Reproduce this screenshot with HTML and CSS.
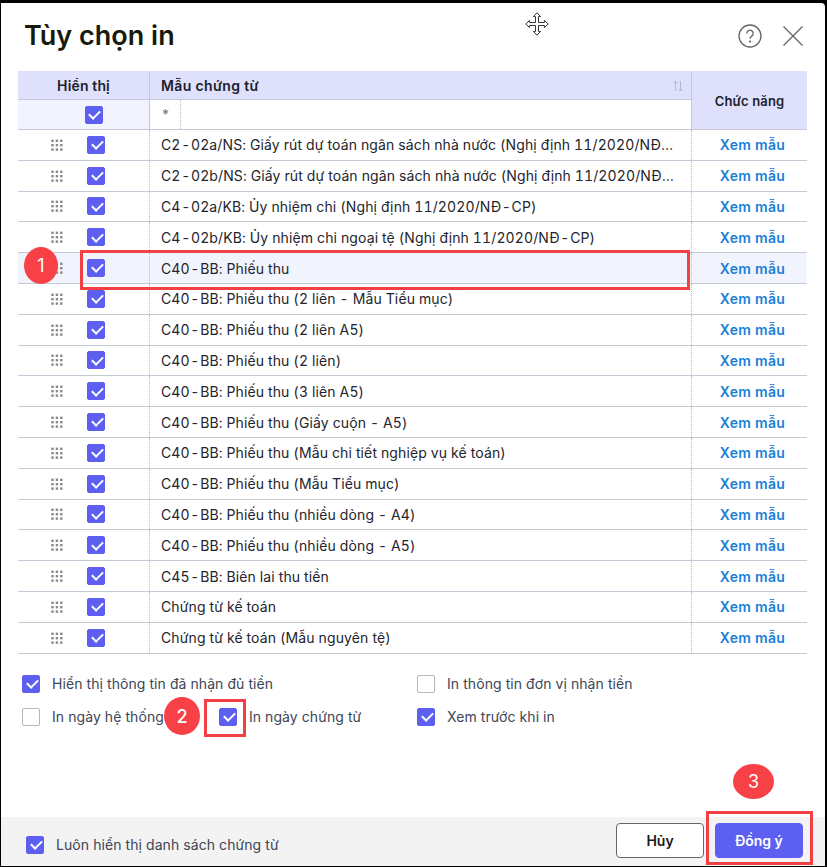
FILE: index.html
```html
<!DOCTYPE html>
<html lang="vi">
<head>
<meta charset="utf-8">
<title>Tùy chọn in</title>
<link rel="stylesheet" href="styles.css">
</head>
<body>
<div class="dialog">
  <header class="head">
    <h1 class="title">Tùy chọn in</h1>
    <div class="head-icons">
      <svg class="ic-help" width="24" height="24" viewBox="0 0 24 24" fill="none" stroke="#666" stroke-width="1.3"><circle cx="12" cy="12" r="11"/><path d="M8.8 9.4a3.2 3.2 0 1 1 4.9 2.7c-1.1.7-1.7 1.3-1.7 2.6"/><circle cx="12" cy="17.6" r=".5" fill="#666"/></svg>
      <svg class="ic-close" width="20" height="20" viewBox="0 0 20 20" fill="none" stroke="#666" stroke-width="1.3"><path d="M.5.5l19 19M19.5.5l-19 19"/></svg>
    </div>
  </header>

  <div class="table">
    <div class="thead">
      <div class="th th-show">Hiển thị</div>
      <div class="th th-name">Mẫu chứng từ
        <svg class="sort" width="10" height="12" viewBox="0 0 10 12" fill="none" stroke="#b5b8c6" stroke-width="1"><path d="M2.5 11V1M.5 3l2-2 2 2M7.5 1v10M5.5 9l2 2 2-2"/></svg>
      </div>
      <div class="th th-fn">Chức năng</div>
      <div class="filter-show"><span class="cb on"></span></div>
      <div class="filter-name"><span class="star">*</span><span class="filter-input"></span></div>
    </div>
    <div id="rows" class="rows"></div>
  </div>

  <div class="options">
    <label class="opt"><span class="cb on"></span>Hiển thị thông tin đã nhận đủ tiền</label>
    <label class="opt"><span class="cb"></span>In thông tin đơn vị nhận tiền</label>
    <div class="opt-pair">
      <label class="opt"><span class="cb"></span>In ngày hệ thống</label>
      <label class="opt"><span class="cb on"></span>In ngày chứng từ</label>
    </div>
    <label class="opt"><span class="cb on"></span>Xem trước khi in</label>
  </div>

  <footer class="foot">
    <label class="opt"><span class="cb on"></span>Luôn hiển thị danh sách chứng từ</label>
    <div class="btns">
      <button class="btn btn-cancel">Hủy</button>
      <button class="btn btn-ok">Đồng ý</button>
    </div>
  </footer>
</div>

<svg class="move" width="24" height="24" viewBox="0 0 24 24" fill="#fff" stroke="#333" stroke-width="1"><path d="M12 .8l3.6 3.8h-2.1v5.9h5.9V8.4l3.8 3.6-3.8 3.6v-2.1h-5.9v5.9h2.1L12 23.2l-3.6-3.8h2.1v-5.9H4.6v2.1L.8 12l3.8-3.6v2.1h5.9V4.6H8.4z"/></svg>
<div class="mark-box box-1"></div>
<div class="mark-box box-2"></div>
<div class="mark-box box-3"></div>
<div class="badge b-1">1</div>
<div class="badge b-2">2</div>
<div class="badge b-3">3</div>
<script src="app.js"></script>
</body>
</html>
```

FILE: app.js
```js
var names = [
  "C2-02a/NS: Giấy rút dự toán ngân sách nhà nước (Nghị định 11/2020/NĐ-CP)",
  "C2-02b/NS: Giấy rút dự toán ngân sách nhà nước (Nghị định 11/2020/NĐ-CP)",
  "C4-02a/KB: Ủy nhiệm chi (Nghị định 11/2020/NĐ-CP)",
  "C4-02b/KB: Ủy nhiệm chi ngoại tệ (Nghị định 11/2020/NĐ-CP)",
  "C40-BB: Phiếu thu",
  "C40-BB: Phiếu thu (2 liên - Mẫu Tiểu mục)",
  "C40-BB: Phiếu thu (2 liên A5)",
  "C40-BB: Phiếu thu (2 liên)",
  "C40-BB: Phiếu thu (3 liên A5)",
  "C40-BB: Phiếu thu (Giấy cuộn - A5)",
  "C40-BB: Phiếu thu (Mẫu chi tiết nghiệp vụ kế toán)",
  "C40-BB: Phiếu thu (Mẫu Tiểu mục)",
  "C40-BB: Phiếu thu (nhiều dòng - A4)",
  "C40-BB: Phiếu thu (nhiều dòng - A5)",
  "C45-BB: Biên lai thu tiền",
  "Chứng từ kế toán",
  "Chứng từ kế toán (Mẫu nguyên tệ)"
];
var dots = '<svg class="grip" width="12" height="12" viewBox="0 0 12 12" fill="#888">';
for (var y = 0; y < 3; y++) for (var x = 0; x < 3; x++)
  dots += '<rect x="' + (x * 4.4 + .3) + '" y="' + (y * 4.4 + .6) + '" width="2.4" height="2.4"/>';
dots += '</svg>';
var html = '';
names.forEach(function (n, i) {
  var label = n.replace(/(\S)-(\S)/g, '$1<span class="hy">-</span>$2');
  html += '<div class="row' + (i === 4 ? ' row-hi' : '') + '">' +
    '<div class="c-show">' + dots + '<span class="cb on"></span></div>' +
    '<div class="c-name"><span class="ellip">' + label + '</span></div>' +
    '<div class="c-fn"><a class="link">Xem mẫu</a></div></div>';
});
document.getElementById('rows').innerHTML = html;
```

FILE: styles.css
```css
* { box-sizing: border-box; }
html, body { margin: 0; height: 100%; }
body {
  width: 827px; height: 867px; background: #000; overflow: hidden; position: relative;
  font-family: Inter, "Noto Sans", sans-serif; color: #1f1f1f;
}
.dialog {
  position: absolute; left: 1px; top: 3px; width: 824px; height: 863px;
  background: #fff; border-top-right-radius: 4px;
  display: flex; flex-direction: column;
}
.head { height: 68px; flex: none; display: flex; align-items: center; justify-content: space-between; padding: 0 22px 3px 23px; }
.title { margin: 0; font-size: 27px; font-weight: 600; line-height: 32px; color: #1a1a0a; }
.head-icons { display: flex; align-items: center; gap: 21px; margin-top: 1px; }
.head-icons svg { display: block; }
.table { margin-left: 17px; width: 789px; flex: none; }
.thead {
  display: grid; grid-template-columns: 132px 542px 115px; grid-template-rows: 29px 29px;
  border-bottom: 1px solid #c7c8d6;
}
.th { background: #dfe0fb; font-size: 14px; font-weight: 600; display: flex; align-items: center; color: #20202c; letter-spacing: .15px; }
.th-show { justify-content: center; border-right: 1px solid #c7c8d6; border-bottom: 1px solid #c7c8d6; }
.th-name { padding-left: 11px; position: relative; border-bottom: 1px solid #c7c8d6; border-right: 1px solid #c7c8d6; letter-spacing: .35px; }
.sort { position: absolute; right: 8px; top: 9px; }
.th-fn { grid-row: 1 / span 2; grid-column: 3; justify-content: center; font-size: 13px; padding-top: 2px; }
.filter-show { background: #f1f3fe; border-right: 1px solid #c7c8d6; display: flex; align-items: center; justify-content: center; padding-left: 20px; }
.filter-name { display: flex; align-items: stretch; border-right: 1px solid #c7c8d6; }
.star { width: 31px; padding: 6px 0 0 12px; color: #777; font-size: 14px; border-right: 1px dotted #b9bbc8; }
.filter-input { flex: 1; }
.row {
  display: grid; grid-template-columns: 132px 542px 115px; height: 30.8px;
  border-bottom: 1px solid #c7c8d6; align-items: stretch;
}
.row-hi { background: #f1f4fd; }
.c-show { display: flex; align-items: center; padding-left: 33px; gap: 24px; border-right: 1px dotted #b9bbc8; }
.grip { flex: none; }
.c-name { display: flex; align-items: center; padding: 0 15px 0 11px; font-size: 14px; min-width: 0; border-right: 1px dotted #b9bbc8; color: #24242c; }
.ellip { overflow: hidden; white-space: nowrap; text-overflow: ellipsis; letter-spacing: .12px; font-variant-numeric: tabular-nums; padding: 2px 0; }
.hy { margin: 0 .6px; }
.c-fn { display: flex; align-items: center; justify-content: center; padding-left: 6px; }
.link { color: #1a7fd8; font-size: 14px; font-weight: 600; letter-spacing: .3px; }
.cb {
  width: 18px; height: 18px; flex: none; border-radius: 2px; border: 1px solid #b4b6c2; background: #fff; display: inline-block; position: relative;
}
.cb.on { background: #5c5fef; border-color: #5c5fef; }
.cb.on::after {
  content: ""; position: absolute; left: 3.6px; top: 3.4px; width: 9px; height: 5px;
  border-left: 2px solid #fff; border-bottom: 2px solid #fff; transform: rotate(-45deg);
}
.options {
  display: grid; grid-template-columns: 395px 1fr; row-gap: 15px; margin: 21px 0 0 21px; flex: none;
}
.opt { display: flex; align-items: center; gap: 12px; font-size: 14px; color: #3d4556; line-height: 18px; white-space: nowrap; letter-spacing: .07px; }
.opt-pair { display: flex; gap: 55px; }
.foot {
  margin-top: auto; height: 49px; background: #f3f3f3; flex: none;
  display: flex; align-items: flex-start; justify-content: space-between; padding: 6px 22px 0 25px;
}
.foot .opt { margin-top: 13px; }
.btns { display: flex; gap: 11px; }
.btn { width: 88px; height: 35px; border-radius: 4px; font: 600 14px Inter, sans-serif; padding: 0; }
.btn-cancel { background: #fff; border: 1px solid #666; color: #1a1a1a; }
.btn-ok { background: #5c5fef; border: 1px solid #5c5fef; color: #fff; }
.move { position: absolute; left: 525px; top: 12px; }
.mark-box { position: absolute; border: 3px solid #f34045; }
.box-1 { left: 80px; top: 250px; width: 610px; height: 40px; }
.box-2 { left: 204px; top: 699px; width: 42px; height: 38px; }
.box-3 { left: 706px; top: 811px; width: 107px; height: 54px; }
.badge {
  position: absolute; border-radius: 50%; background: #f84146; color: #fff;
  display: flex; align-items: center; justify-content: center; font-size: 18px;
}
.b-1 { left: 24px; top: 247px; width: 34px; height: 37px; }
.b-2 { left: 164px; top: 697px; width: 36px; height: 38px; font-weight: 500; }
.b-3 { left: 733px; top: 764px; width: 41px; height: 35px; }
```
